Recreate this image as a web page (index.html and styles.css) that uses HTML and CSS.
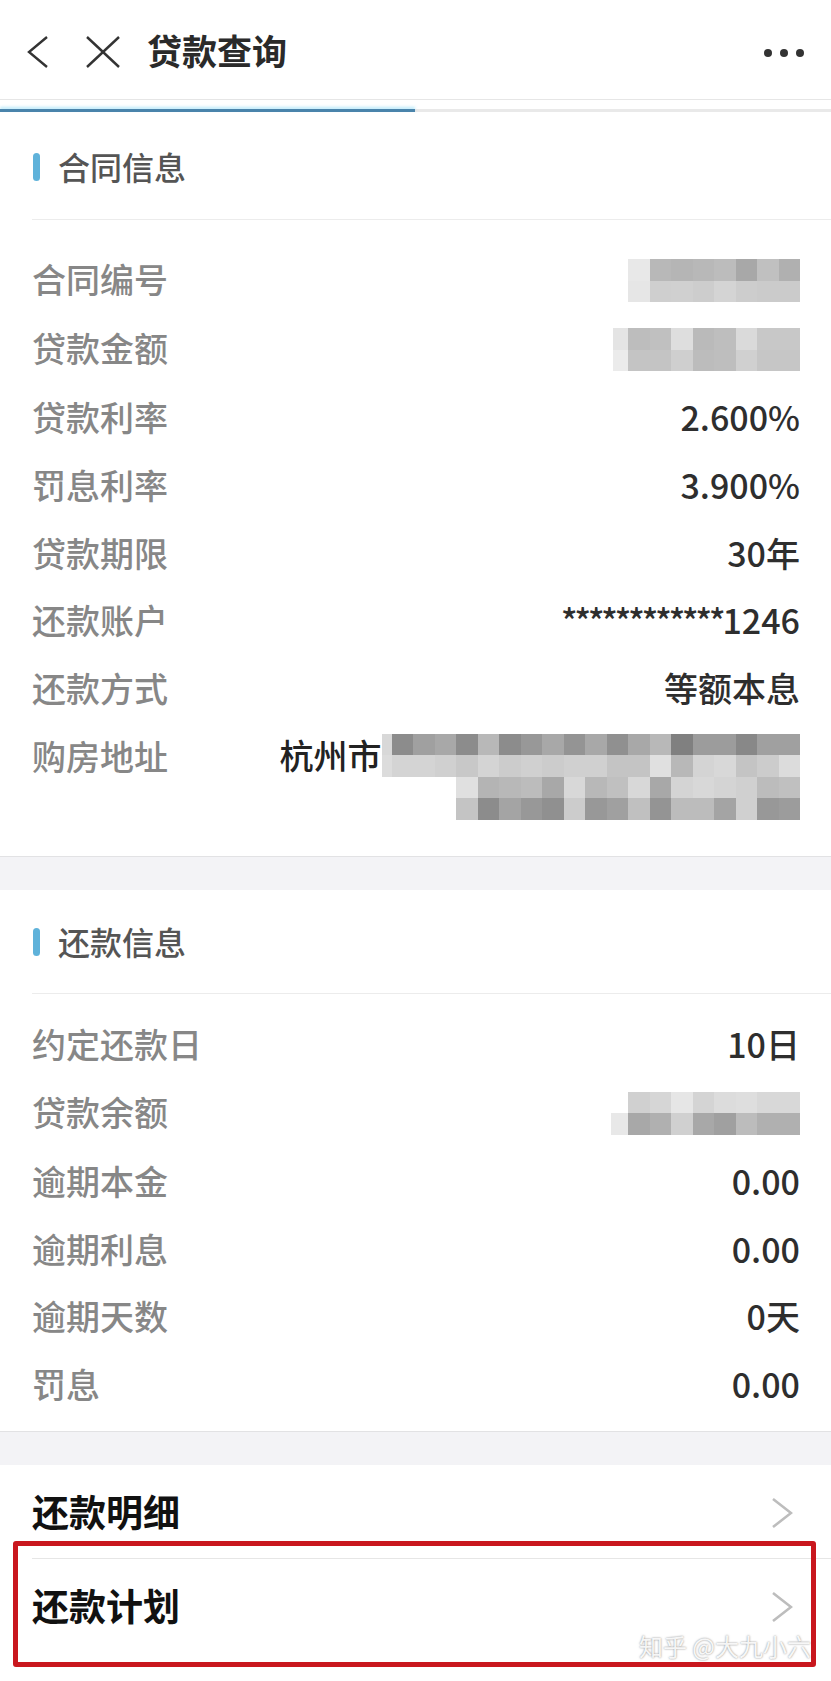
FILE: index.html
```html
<!DOCTYPE html>
<html lang="zh-CN">
<head>
    <meta charset="UTF-8">
    <meta name="viewport" content="width=device-width, initial-scale=1.0">
    <title>贷款查询</title>
    <link rel="stylesheet" href="styles.css">
</head>
<body>
    <header class="topbar">
        <svg class="icon-back" width="22" height="34" viewBox="0 0 22 34">
            <polyline points="20,2 2,17 20,32" fill="none" stroke="#333" stroke-width="2.4" />
        </svg>
        <svg class="icon-close" width="36" height="34" viewBox="0 0 36 34">
            <line x1="2" y1="2" x2="34" y2="32" stroke="#333" stroke-width="2.4" />
            <line x1="34" y1="2" x2="2" y2="32" stroke="#333" stroke-width="2.4" />
        </svg>
        <h1 class="title">贷款查询</h1>
        <svg class="icon-more" width="40" height="10" viewBox="0 0 40 10">
            <circle cx="4" cy="5" r="4" fill="#333" />
            <circle cx="20" cy="5" r="4" fill="#333" />
            <circle cx="36" cy="5" r="4" fill="#333" />
        </svg>
    </header>
    <div class="progress"><div class="progress-fill"></div></div>

    <section class="card card-first">
        <div class="card-title"><span class="marker"></span>合同信息</div>
        <div class="rows">
            <div class="row">
                <span class="label">合同编号</span>
                <span class="value"><span class="mosaic" data-rows="e8 b8 b5 b8 bc a8 c0 b0|e6 cf d0 cd d4 cd cb cb"></span></span>
            </div>
            <div class="row">
                <span class="label">贷款金额</span>
                <span class="value"><span class="mosaic" data-rows="e4:15 bd c0 de ba be da c8 c8|eb:15 c4 c4 cf bc be d0 c6 c6"></span></span>
            </div>
            <div class="row">
                <span class="label">贷款利率</span>
                <span class="value">2.600%</span>
            </div>
            <div class="row">
                <span class="label">罚息利率</span>
                <span class="value">3.900%</span>
            </div>
            <div class="row">
                <span class="label">贷款期限</span>
                <span class="value">30年</span>
            </div>
            <div class="row">
                <span class="label">还款账户</span>
                <span class="value"><span class="stars">************</span>1246</span>
            </div>
            <div class="row">
                <span class="label">还款方式</span>
                <span class="value">等额本息</span>
            </div>
            <div class="row">
                <span class="label">购房地址</span>
                <div class="value address">
                    <div class="address-line">
                        <span class="city">杭州市</span>
                        <span class="mosaic" data-rows="d8:10 8c a0 a8 8c b8 8c 98 a8 94 a8 90 a8 b8 80 9c 9c 88 a0 a0|dc:10 d4 d4 d0 c8 d4 cc d0 cc d0 d0 c4 c4 e0 b8 d4 d8 c4 cc dc"></span>
                    </div>
                    <div class="address-line">
                        <span class="mosaic" data-rows="e0 b4 b8 bc a8 d8 b8 c0 d8 a8 d4 d8 d4 d0 bc c0|c4 8c a4 98 90 cc 98 a0 c0 94 bc bc a4 d0 98 9c"></span>
                    </div>
                </div>
            </div>
        </div>
    </section>

    <div class="gap"></div>

    <section class="card card-second">
        <div class="card-title"><span class="marker"></span>还款信息</div>
        <div class="rows">
            <div class="row">
                <span class="label">约定还款日</span>
                <span class="value">10日</span>
            </div>
            <div class="row">
                <span class="label">贷款余额</span>
                <span class="value"><span class="mosaic" data-rows="ff:17 d0 d6 e6 d4 dc de d8 d8|e8:17 a8 b0 d0 a8 a0 bc b0 b0"></span></span>
            </div>
            <div class="row">
                <span class="label">逾期本金</span>
                <span class="value">0.00</span>
            </div>
            <div class="row">
                <span class="label">逾期利息</span>
                <span class="value">0.00</span>
            </div>
            <div class="row">
                <span class="label">逾期天数</span>
                <span class="value">0天</span>
            </div>
            <div class="row">
                <span class="label">罚息</span>
                <span class="value">0.00</span>
            </div>
        </div>
    </section>

    <div class="gap"></div>

    <section class="links">
        <a class="link-row" href="#">
            <span>还款明细</span>
            <svg width="22" height="32" viewBox="0 0 22 32">
                <polyline points="2,2 20,16 2,30" fill="none" stroke="#bdbdbd" stroke-width="2.6" />
            </svg>
        </a>
        <a class="link-row" href="#">
            <span>还款计划</span>
            <svg width="22" height="32" viewBox="0 0 22 32">
                <polyline points="2,2 20,16 2,30" fill="none" stroke="#bdbdbd" stroke-width="2.6" />
            </svg>
        </a>
        <div class="mark"></div>
        <div class="watermark">知乎 @大九小六</div>
    </section>

    <script>
        // Собираем мозаику из серых клеток
        document.querySelectorAll('.mosaic').forEach(function (el) {
            el.dataset.rows.split('|').forEach(function (row) {
                var line = document.createElement('div');
                line.className = 'mosaic-row';
                row.trim().split(' ').forEach(function (cell) {
                    var parts = cell.split(':');
                    var c = document.createElement('span');
                    c.className = 'cell';
                    c.style.background = '#' + parts[0] + parts[0] + parts[0];
                    if (parts[1]) {
                        c.style.width = parts[1] + 'px';
                    }
                    line.appendChild(c);
                });
                el.appendChild(line);
            });
        });
    </script>
</body>
</html>
```

FILE: styles.css
```css
body {
    margin: 0;
    background-color: #fff;
    font-family: "Noto Sans CJK SC", "Noto Sans", sans-serif;
    color: #333;
}

.topbar {
    display: flex;
    align-items: center;
    height: 99px;
    padding: 0 27px;
    border-bottom: 1px solid #e6e6e6;
}

.icon-back {
    margin-top: 4px;
}

.icon-close {
    margin-left: 36px;
    margin-top: 4px;
}

.title {
    margin: 0 0 0 26px;
    font-size: 35px;
    font-weight: 700;
    color: #2a2a2a;
}

.icon-more {
    margin-left: auto;
    margin-top: 6px;
}

.progress {
    height: 3px;
    margin: 9px 0 1px;
    background-color: #e9e9e9;
}

    .progress-fill {
        width: 415px;
        height: 100%;
        background-color: #4a84ab;
        box-shadow: 0 -2px 3px rgba(130, 215, 245, 0.55);
    }

.card {
    background-color: #fff;
}

.card-first {
    padding-bottom: 24px;
}

.card-second {
    padding-bottom: 13px;
}

.card-title {
    display: flex;
    align-items: center;
    box-sizing: border-box;
    height: 107px;
    margin-left: 32px;
    border-bottom: 1px solid #ececec;
    font-size: 32px;
    font-weight: 500;
    color: #555;
}

.card-second .card-title {
    height: 104px;
}

    .marker {
        width: 7px;
        height: 28px;
        margin: 2px 18px 0 1px;
        border-radius: 4px;
        background-color: #5fb2da;
    }

.card-first .rows {
    padding-top: 25px;
}

.card-second .rows {
    padding-top: 16px;
}

.row {
    display: flex;
    justify-content: space-between;
    align-items: flex-start;
    padding: 12px 31px 12px 32px;
    line-height: 43.8px;
}

.label {
    font-size: 34px;
    font-weight: 500;
    color: #878787;
    white-space: nowrap;
}

.value {
    font-size: 34px;
    font-weight: 500;
    color: #2e2e2e;
    text-align: right;
}

.stars {
    letter-spacing: -3px;
}

.mosaic {
    display: inline-flex;
    flex-direction: column;
    vertical-align: top;
    margin-top: 2px;
}

    .mosaic-row {
        display: flex;
        justify-content: flex-end;
    }

    .cell {
        width: 21.5px;
        height: 21.5px;
    }

.address {
    display: flex;
    flex-direction: column;
    align-items: flex-end;
}

    .address-line {
        display: flex;
        align-items: center;
        height: 43px;
    }

        .address-line .mosaic {
            margin-top: 0;
        }

    .city {
        color: #222;
        margin-top: -2px;
    }

.gap {
    height: 33px;
    background-color: #f3f3f6;
    border-top: 1px solid #e2e2e4;
}

.links {
    position: relative;
    background-color: #fff;
    padding-bottom: 27px;
}

.link-row {
    display: flex;
    justify-content: space-between;
    align-items: center;
    height: 93px;
    margin-left: 32px;
    padding-right: 38px;
    font-size: 37px;
    font-weight: 700;
    color: #111;
    text-decoration: none;
}

    .link-row + .link-row {
        border-top: 1px solid #e6e6e6;
    }

    .link-row svg {
        margin-top: 4px;
    }

/* красная рамка поверх второй строки */
.mark {
    position: absolute;
    top: 76px;
    left: 13px;
    width: 803px;
    height: 126px;
    box-sizing: border-box;
    border: 5px solid #c9171e;
    border-radius: 3px;
}

.watermark {
    position: absolute;
    top: 166px;
    right: 20px;
    font-size: 24px;
    line-height: 30px;
    color: rgba(255, 255, 255, 0.92);
    text-shadow: 0 0 2px rgba(0, 0, 0, 0.5);
}
```
